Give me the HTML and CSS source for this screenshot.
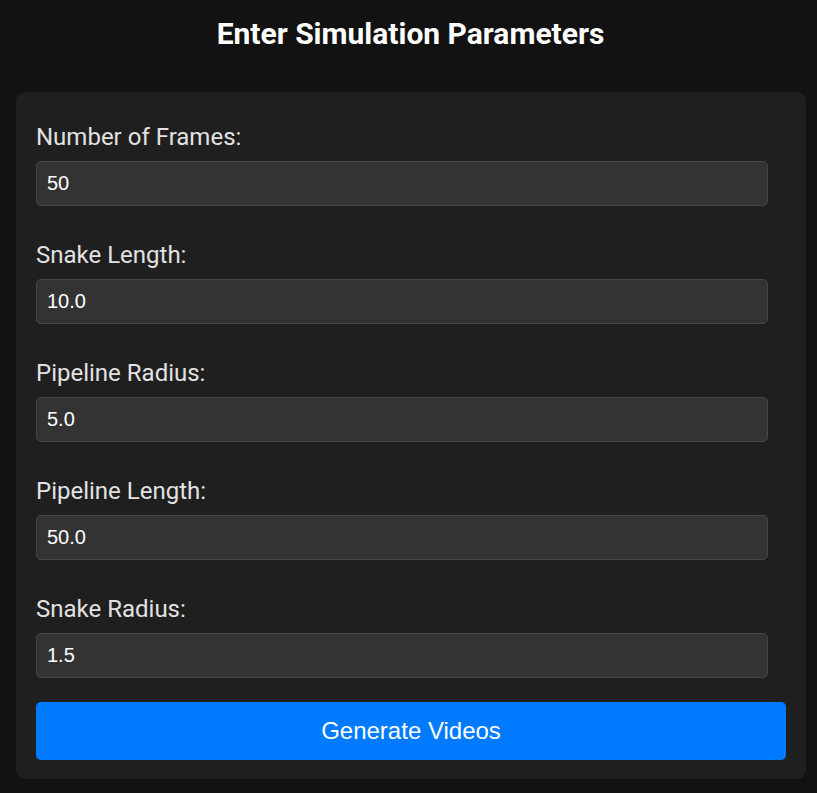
FILE: index.html
```html
<!DOCTYPE html>
<html lang="en">
<head>
<meta charset="utf-8">
<title>Enter Simulation Parameters</title>
<link rel="stylesheet" href="styles.css">
</head>
<body>
<h1 class="title">Enter Simulation Parameters</h1>
<form class="card">
  <div class="fields">
    <div class="group">
      <label class="label" for="frames">Number of Frames:</label>
      <input class="input" id="frames" type="text" value="50">
    </div>
    <div class="group">
      <label class="label" for="slen">Snake Length:</label>
      <input class="input" id="slen" type="text" value="10.0">
    </div>
    <div class="group">
      <label class="label" for="prad">Pipeline Radius:</label>
      <input class="input" id="prad" type="text" value="5.0">
    </div>
    <div class="group">
      <label class="label" for="plen">Pipeline Length:</label>
      <input class="input" id="plen" type="text" value="50.0">
    </div>
    <div class="group">
      <label class="label" for="srad">Snake Radius:</label>
      <input class="input" id="srad" type="text" value="1.5">
    </div>
  </div>
  <button class="button" type="button">Generate Videos</button>
</form>
</body>
</html>
```
FILE: styles.css
```css
html, body {
  margin: 0;
  padding: 0;
  background: #121212;
}
body {
  font-family: Roboto, "Liberation Sans", sans-serif;
  color: #e0e0e0;
  overflow: hidden;
}
.title {
  margin: 17px 0 0;
  padding-left: 4px;
  text-align: center;
  font-size: 30px;
  font-weight: 700;
  line-height: 34px;
  color: #ffffff;
}
.card {
  box-sizing: border-box;
  width: 790px;
  margin: 41px 0 0 16px;
  padding: 32px 20px 19px;
  background: #1f1f1f;
  border-radius: 9px;
  display: flex;
  flex-direction: column;
}
.fields {
  display: flex;
  flex-direction: column;
  gap: 36px;
}
.group {
  display: flex;
  flex-direction: column;
  gap: 10px;
}
.label {
  font-size: 24px;
  line-height: 27px;
  color: #e2e2e2;
}
.input {
  box-sizing: border-box;
  width: 732px;
  height: 45px;
  margin: 0;
  padding: 0 10px;
  background: #333333;
  border: 1px solid #464646;
  border-radius: 5px;
  color: #ffffff;
  font-family: "Liberation Sans", Arial, sans-serif;
  font-size: 20px;
  outline: none;
}
.button {
  margin-top: 24px;
  height: 58px;
  width: 100%;
  border: none;
  border-radius: 5px;
  background: #007bff;
  color: #ffffff;
  font-family: "Liberation Sans", Arial, sans-serif;
  font-size: 24px;
  cursor: pointer;
}
```
